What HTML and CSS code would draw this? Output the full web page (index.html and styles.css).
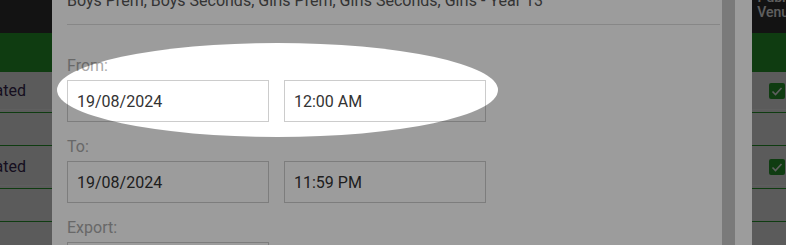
FILE: index.html
```html
<!DOCTYPE html>
<html lang="en">
<head>
  <meta charset="UTF-8">
  <meta name="viewport" content="width=device-width, initial-scale=1.0">
  <title>Export Fixtures</title>
  <link rel="stylesheet" href="styles.css">
</head>
<body>
  <!-- fixtures grid behind the dialog -->
  <div class="page">
    <div class="grid-top">
      <div class="cell-name"></div>
      <div class="cell-mid"></div>
      <div class="cell-venue venue-head">Public<br>Venue</div>
    </div>
    <div class="grid-bar"></div>

    <div class="rec">
      <div class="rec-main">
        <div class="cell-name"><a class="rec-link">Created</a></div>
        <div class="cell-mid"></div>
        <div class="cell-venue">
          <svg class="tick" width="16" height="16" viewBox="0 0 16 16"><rect width="16" height="16" rx="2" fill="#2ba030"/><polyline points="3.5,8.5 6.5,11.5 12.5,5" fill="none" stroke="#fff" stroke-width="1.6"/></svg>
        </div>
      </div>
      <div class="rec-detail"></div>
    </div>

    <div class="rec">
      <div class="rec-main">
        <div class="cell-name"><a class="rec-link">Created</a></div>
        <div class="cell-mid"></div>
        <div class="cell-venue">
          <svg class="tick" width="16" height="16" viewBox="0 0 16 16"><rect width="16" height="16" rx="2" fill="#2ba030"/><polyline points="3.5,8.5 6.5,11.5 12.5,5" fill="none" stroke="#fff" stroke-width="1.6"/></svg>
        </div>
      </div>
      <div class="rec-detail"></div>
    </div>
  </div>

  <div class="backdrop"></div>

  <!-- export dialog, scrolled part way down -->
  <div class="modal">
    <div class="modal-body">
      <p class="teams">Boys Prem, Boys Seconds, Girls Prem, Girls Seconds, Girls - Year 13</p>
      <hr class="divider">

      <div class="field">
        <label class="field-label">From:</label>
        <div class="field-row">
          <input class="field-input" type="text" value="19/08/2024">
          <input class="field-input" type="text" value="12:00 AM">
        </div>
      </div>

      <div class="field">
        <label class="field-label">To:</label>
        <div class="field-row">
          <input class="field-input" type="text" value="19/08/2024">
          <input class="field-input" type="text" value="11:59 PM">
        </div>
      </div>

      <div class="field">
        <label class="field-label">Export:</label>
        <div class="field-row">
          <input class="field-input" type="text" value="">
        </div>
      </div>
    </div>
    <div class="modal-scroll"></div>
  </div>

  <!-- highlight around the From fields -->
  <div class="spotlight"></div>
</body>
</html>
```

FILE: styles.css
```css
body {
  margin: 0;
  font-family: Roboto, "Liberation Sans", sans-serif;
  height: 245px;
  overflow: hidden;
  position: relative;
}

/* grid behind */
.page {
  width: 802px;
  height: 245px;
  background: #f5f5f5;
}

.grid-top,
.rec-main {
  display: flex;
}

.cell-name {
  width: 26px;
  flex: none;
  display: flex;
  justify-content: flex-end;
  overflow: hidden;
  white-space: nowrap;
}

.cell-mid {
  flex: 1;
}

.cell-venue {
  width: 50px;
  flex: none;
  display: flex;
  align-items: center;
  justify-content: center;
}

.grid-top {
  height: 33px;
  background: #333;
  color: #fff;
}

.venue-head {
  align-items: flex-end;
  text-align: center;
  font-size: 14px;
  line-height: 15px;
  font-weight: 500;
  padding-bottom: 13px;
  box-sizing: border-box;
}

.grid-bar {
  height: 39px;
  background: #2ba030;
}

.rec-main {
  height: 37px;
  align-items: center;
  border-bottom: 1px solid #fff;
  font-size: 16px;
}

.rec-link {
  color: #3c2a55;
}

.tick {
  display: block;
}

.rec-detail {
  height: 32px;
  margin: 2px 0;
  border-top: 1px solid #2ba030;
  border-bottom: 1px solid #2ba030;
}

.backdrop {
  position: absolute;
  top: 0;
  left: 0;
  right: 0;
  bottom: 0;
  background: rgba(0, 0, 0, 0.39);
}

/* dialog */
.modal {
  position: absolute;
  top: 0;
  left: 52px;
  width: 700px;
  height: 245px;
  padding-right: 17px;
  box-sizing: border-box;
  background: #fff;
  display: flex;
  overflow: hidden;
}

.modal-body {
  flex: 1;
  padding: 0 2px 0 15px;
}

.modal-scroll {
  width: 13px;
  flex: none;
  background: #c8c8c8;
}

.teams {
  margin: -9px 0 0;
  font-size: 16px;
  line-height: 19px;
  color: #555;
}

.divider {
  border: 0;
  border-top: 1px solid #ddd;
  margin: 14px 0 31px;
}

.field {
  margin-bottom: 15px;
}

.field-label {
  display: block;
  font-size: 16px;
  line-height: 19px;
  color: #aaa;
  margin-bottom: 5px;
}

.field-row {
  display: flex;
  gap: 15px;
}

.field-input {
  width: 202px;
  height: 42px;
  margin: 0;
  padding: 0 9px;
  box-sizing: border-box;
  border: 1px solid #ccc;
  border-radius: 0;
  background: #fff;
  font-family: Roboto, "Liberation Sans", sans-serif;
  font-size: 16px;
  color: #333;
  outline: none;
}

.spotlight {
  position: absolute;
  left: 57px;
  top: 43px;
  width: 441px;
  height: 94px;
  border-radius: 50%;
  box-shadow: 0 0 0 1000px rgba(0, 0, 0, 0.39);
  pointer-events: none;
}
```
